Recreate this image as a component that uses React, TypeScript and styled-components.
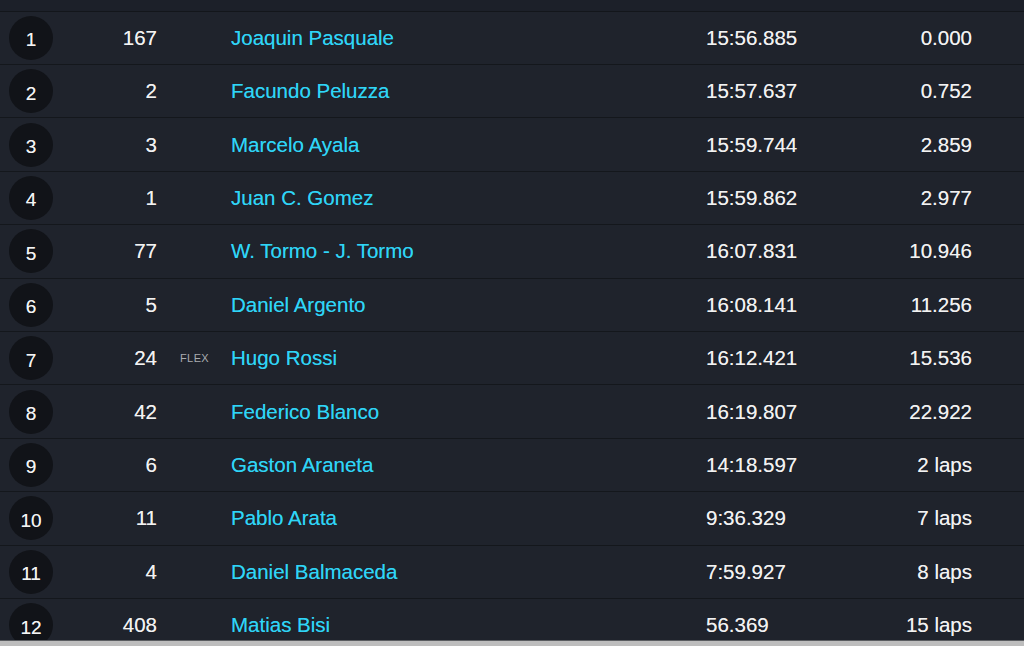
import React from 'react';
import styled, { createGlobalStyle } from 'styled-components';

interface Result {
  pos: number;
  num: string;
  tag?: string;
  name: string;
  time: string;
  gap: string;
}

const results: Result[] = [
  { pos: 1, num: '167', name: 'Joaquin Pasquale', time: '15:56.885', gap: '0.000' },
  { pos: 2, num: '2', name: 'Facundo Peluzza', time: '15:57.637', gap: '0.752' },
  { pos: 3, num: '3', name: 'Marcelo Ayala', time: '15:59.744', gap: '2.859' },
  { pos: 4, num: '1', name: 'Juan C. Gomez', time: '15:59.862', gap: '2.977' },
  { pos: 5, num: '77', name: 'W. Tormo - J. Tormo', time: '16:07.831', gap: '10.946' },
  { pos: 6, num: '5', name: 'Daniel Argento', time: '16:08.141', gap: '11.256' },
  { pos: 7, num: '24', tag: 'FLEX', name: 'Hugo Rossi', time: '16:12.421', gap: '15.536' },
  { pos: 8, num: '42', name: 'Federico Blanco', time: '16:19.807', gap: '22.922' },
  { pos: 9, num: '6', name: 'Gaston Araneta', time: '14:18.597', gap: '2 laps' },
  { pos: 10, num: '11', name: 'Pablo Arata', time: '9:36.329', gap: '7 laps' },
  { pos: 11, num: '4', name: 'Daniel Balmaceda', time: '7:59.927', gap: '8 laps' },
  { pos: 12, num: '408', name: 'Matias Bisi', time: '56.369', gap: '15 laps' },
];

const GlobalStyle = createGlobalStyle`
  html, body {
    margin: 0;
    padding: 0;
    background: #1e222b;
    overflow: hidden;
  }
`;

const Page = styled.div`
  height: 646px;
  display: flex;
  flex-direction: column;
  font-family: "Liberation Sans", Arial, sans-serif;
`;

const Viewport = styled.div`
  flex: 1;
  overflow: hidden;
  background: #1e222b;
`;

const TopStrip = styled.div`
  height: 10.6px;
  background: #1c2029;
  border-bottom: 1px solid #13161b;
`;

const Row = styled.div`
  display: grid;
  grid-template-columns: 62px 95px 74px 475px 160px 106px 1fr;
  align-items: center;
  height: 53.4px;
  box-sizing: border-box;
  border-bottom: 1px solid #14171c;
  background: #1f232c;
  color: #f2f2f2;
  font-size: 20.5px;
  text-shadow: 0 0 0.4px rgba(255, 255, 255, 0.6);
`;

const PosBadge = styled.div`
  width: 44px;
  height: 44px;
  margin-left: 9px;
  border-radius: 50%;
  background: #111318;
  color: #f4f4f4;
  font-size: 19px;
  display: flex;
  align-items: center;
  justify-content: center;
  padding-top: 5px;
  box-sizing: border-box;
`;

const Num = styled.div`
  text-align: right;
`;

const Tag = styled.div`
  padding-left: 23px;
  font-size: 11px;
  letter-spacing: 0.4px;
  color: #a9abb0;
  text-shadow: none;
`;

const Name = styled.div`
  color: #2fd5f7;
  white-space: nowrap;
  text-shadow: 0 0 0.4px rgba(47, 213, 247, 0.6);
`;

const Time = styled.div`
  white-space: nowrap;
`;

const Gap = styled.div`
  text-align: right;
  white-space: nowrap;
`;

const ScrollBar = styled.div`
  height: 5px;
  background: #bdbdbd;
  border-top: 1px solid #5a5c60;
`;

export default function App() {
  return (
    <>
      <GlobalStyle />
      <Page>
        <Viewport>
          <TopStrip />
          {results.map(r => (
            <Row key={r.pos}>
              <PosBadge>{r.pos}</PosBadge>
              <Num>{r.num}</Num>
              <Tag>{r.tag ?? ''}</Tag>
              <Name>{r.name}</Name>
              <Time>{r.time}</Time>
              <Gap>{r.gap}</Gap>
              <div />
            </Row>
          ))}
        </Viewport>
        <ScrollBar />
      </Page>
    </>
  );
}
